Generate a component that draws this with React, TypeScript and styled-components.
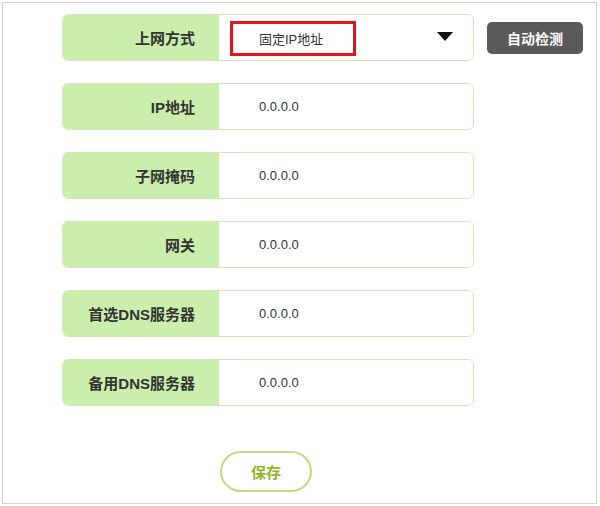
import styled, { createGlobalStyle } from "styled-components";

const GlobalStyle = createGlobalStyle`
  html, body {
    margin: 0;
    padding: 0;
    background: #ffffff;
  }
  body {
    font-family: "Liberation Sans", "Noto Sans CJK SC", sans-serif;
  }
`;

interface Field {
  label: string;
  value: string;
}

const fields: Field[] = [
  { label: "IP地址", value: "0.0.0.0" },
  { label: "子网掩码", value: "0.0.0.0" },
  { label: "网关", value: "0.0.0.0" },
  { label: "首选DNS服务器", value: "0.0.0.0" },
  { label: "备用DNS服务器", value: "0.0.0.0" },
];

const Page = styled.div`
  padding: 2px 0 0 2px;
  width: 600px;
  height: 506px;
  box-sizing: border-box;
`;

const Frame = styled.div`
  width: 595px;
  height: 502px;
  box-sizing: border-box;
  border: 1px solid #d2d2d2;
  padding: 11px 0 0 59px;
`;

const Form = styled.div`
  display: flex;
  flex-direction: column;
  gap: 22px;
`;

const Line = styled.div`
  display: flex;
  align-items: center;
  gap: 13px;
`;

const Row = styled.div`
  display: flex;
  width: 412px;
  height: 47px;
  box-sizing: border-box;
  border: 1px solid #d8e4b6;
  border-radius: 6px;
  overflow: hidden;
`;

const Label = styled.div`
  width: 156px;
  flex-shrink: 0;
  background: #caeeac;
  display: flex;
  align-items: center;
  justify-content: flex-end;
  padding-right: 24px;
  box-sizing: border-box;
  font-size: 15px;
  font-weight: 700;
  color: #333333;
`;

const Value = styled.div<{ $pad: number }>`
  flex: 1;
  display: flex;
  align-items: center;
  padding-left: ${(p) => p.$pad}px;
  padding-right: 20px;
  font-size: 13px;
  color: #333333;
  background: #ffffff;
`;

const Highlight = styled.div`
  width: 126px;
  height: 35px;
  margin-top: 2px;
  box-sizing: border-box;
  border: 3px solid #e3121c;
  display: flex;
  align-items: center;
  padding-left: 26px;
`;

const Arrow = styled.div`
  margin-left: auto;
  margin-top: -2px;
  width: 0;
  height: 0;
  border-left: 8px solid transparent;
  border-right: 8px solid transparent;
  border-top: 9px solid #111111;
`;

const DetectButton = styled.button`
  width: 96px;
  height: 32px;
  border: none;
  border-radius: 5px;
  background: #5a5a5a;
  color: #ffffff;
  font-family: inherit;
  font-size: 14px;
  font-weight: 700;
  cursor: pointer;
`;

const SaveButton = styled.button`
  margin: 45px 0 0 158px;
  width: 92px;
  height: 41px;
  border: 2px solid #c3da7c;
  border-radius: 21px;
  background: #ffffff;
  color: #8fb52a;
  font-family: inherit;
  font-size: 15px;
  font-weight: 700;
  cursor: pointer;
`;

export default function App() {
  return (
    <>
      <GlobalStyle />
      <Page>
        <Frame>
          <Form>
            <Line>
              <Row>
                <Label>上网方式</Label>
                <Value $pad={11}>
                  <Highlight>固定IP地址</Highlight>
                  <Arrow />
                </Value>
              </Row>
              <DetectButton>自动检测</DetectButton>
            </Line>
            {fields.map((f) => (
              <Row key={f.label}>
                <Label>{f.label}</Label>
                <Value $pad={40}>{f.value}</Value>
              </Row>
            ))}
          </Form>
          <SaveButton>保存</SaveButton>
        </Frame>
      </Page>
    </>
  );
}
